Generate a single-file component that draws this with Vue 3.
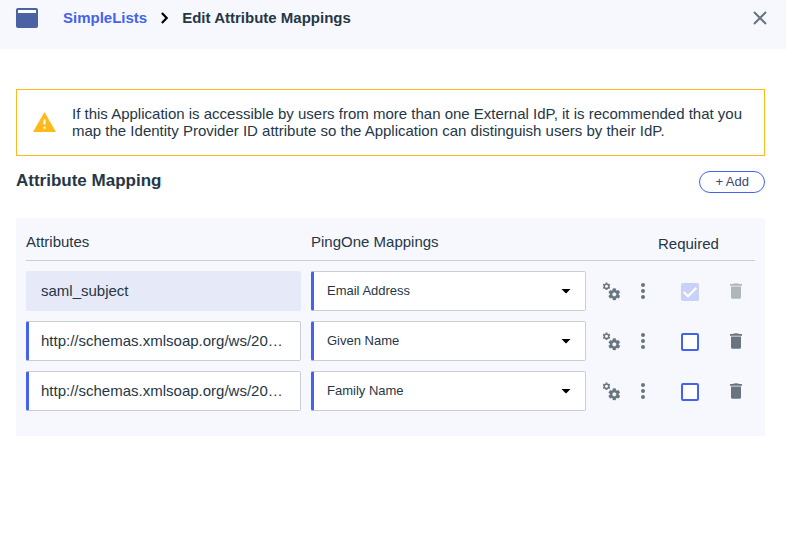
<script setup>
import { reactive } from 'vue'

const options = ['Email Address', 'Given Name', 'Family Name']

const rows = reactive([
  { attribute: 'saml_subject', mapping: 'Email Address', required: true, locked: true },
  { attribute: 'http://schemas.xmlsoap.org/ws/20…', mapping: 'Given Name', required: false, locked: false },
  { attribute: 'http://schemas.xmlsoap.org/ws/20…', mapping: 'Family Name', required: false, locked: false }
])

function addRow() {
  rows.push({ attribute: '', mapping: options[0], required: false, locked: false })
}

function removeRow(index) {
  rows.splice(index, 1)
}
</script>

<template>
  <div class="page">
    <header class="topbar">
      <svg class="app-icon" width="22" height="20" viewBox="0 0 22 20" aria-hidden="true">
        <rect width="22" height="20" rx="2" fill="#4a61a3" />
        <rect x="2" y="2" width="18" height="3" fill="#fff" />
      </svg>
      <nav class="crumbs" aria-label="Breadcrumb">
        <a class="crumb-link" href="#">SimpleLists</a>
        <svg class="chevron" width="7" height="12" viewBox="0 0 7 12" aria-hidden="true">
          <path d="M.9 .9L5.700 6 .9 11.100" fill="none" stroke="#000" stroke-width="2.2" />
        </svg>
        <span>Edit Attribute Mappings</span>
      </nav>
      <button class="icon-button" type="button" aria-label="Close">
        <svg width="14" height="14" viewBox="0 0 14 14" aria-hidden="true">
          <path d="M1 1l12 12M13 1L1 13" fill="none" stroke="#68747f" stroke-width="2" />
        </svg>
      </button>
    </header>

    <main class="content">
      <div class="alert" role="alert">
        <svg class="alert-icon" width="25" height="25" viewBox="0 0 24 24" aria-hidden="true">
          <path fill="#ffb91d" d="M1 21h22L12 2 1 21z" />
          <path fill="#fff" d="M13 18h-2v-2h2v2zm0-4h-2V9h2v5z" />
        </svg>
        <p>
          If this Application is accessible by users from more than one External IdP, it is recommended that you
          map the Identity Provider ID attribute so the Application can distinguish users by their IdP.
        </p>
      </div>

      <div class="section-head">
        <h2>Attribute Mapping</h2>
        <button class="add-button" type="button" @click="addRow">+ Add</button>
      </div>

      <div class="panel">
        <table class="mappings">
          <colgroup>
            <col />
            <col />
            <col class="col-tools" />
            <col class="col-required" />
            <col class="col-delete" />
          </colgroup>
          <thead>
            <tr>
              <th scope="col">Attributes</th>
              <th scope="col">PingOne Mappings</th>
              <td></td>
              <th scope="col" class="th-required">Required</th>
              <td></td>
            </tr>
          </thead>
          <tbody>
            <tr v-for="(row, i) in rows" :key="i">
              <td class="field-cell">
                <input v-model="row.attribute" class="field text-field" type="text" :disabled="row.locked" aria-label="Attribute" />
              </td>
              <td class="field-cell">
                <div class="stack">
                  <select v-model="row.mapping" class="field select-field" aria-label="PingOne mapping">
                    <option v-for="option in options" :key="option">{{ option }}</option>
                  </select>
                  <svg class="caret" width="10" height="5" viewBox="0 0 10 5" aria-hidden="true">
                    <path d="M0.5 0h9L5.6 4.100q-.6.5-1.2 0z" fill="#000" />
                  </svg>
                </div>
              </td>
              <td>
                <div class="tools">
                  <button class="icon-button" type="button" aria-label="Advanced expression">
                    <svg width="20" height="20" viewBox="0 0 20 20" fill="#68747f" aria-hidden="true">
                      <g transform="translate(5.1 6.1) scale(.6)">
                        <path stroke="#68747f" stroke-width=".5" d="M19.14 12.94c.04-.3.06-.61.06-.94 0-.32-.02-.64-.07-.94l2.03-1.58c.18-.14.23-.41.12-.61l-1.92-3.32c-.12-.22-.37-.29-.59-.22l-2.39.96c-.5-.38-1.03-.7-1.62-.94l-.36-2.54c-.04-.24-.24-.41-.48-.41h-3.84c-.24 0-.43.17-.47.41l-.36 2.54c-.59.24-1.13.57-1.62.94l-2.39-.96c-.22-.08-.47 0-.59.22L2.74 8.87c-.12.21-.08.47.12.61l2.03 1.58c-.05.3-.09.63-.09.94s.02.64.07.94l-2.03 1.58c-.18.14-.23.41-.12.61l1.92 3.32c.12.22.37.29.59.22l2.39-.96c.5.38 1.03.7 1.62.94l.36 2.54c.05.24.24.41.48.41h3.84c.24 0 .44-.17.47-.41l.36-2.54c.59-.24 1.13-.56 1.62-.94l2.39.96c.22.08.47 0 .59-.22l1.92-3.32c.12-.22.07-.47-.12-.61l-2.01-1.58zM12 15.6c-1.98 0-3.6-1.62-3.6-3.6s1.62-3.6 3.6-3.6 3.6 1.62 3.6 3.6-1.62 3.6-3.6 3.6z" />
                      </g>
                      <g transform="translate(4.5 5.3)" fill="none" stroke="#68747f">
                        <circle r="2.2" stroke-width="1.4" />
                        <path d="M0-3.8v1.4M0 3.8V2.4M-3.3-1.9l1.2.7M3.3 1.9l-1.2-.7M-3.3 1.9l1.2-.7M3.3-1.9l-1.2.7" stroke-width="1.8" />
                      </g>
                    </svg>
                  </button>
                  <button class="icon-button" type="button" aria-label="More options">
                    <svg width="4" height="16" viewBox="0 0 4 16" fill="#68747f" aria-hidden="true">
                      <circle cx="2" cy="2" r="2" />
                      <circle cx="2" cy="8" r="2" />
                      <circle cx="2" cy="14" r="2" />
                    </svg>
                  </button>
                </div>
              </td>
              <td class="required-cell">
                <div class="check">
                  <input v-model="row.required" type="checkbox" :disabled="row.locked" aria-label="Required" />
                  <svg v-if="row.required" width="18" height="18" viewBox="0 0 18 18" aria-hidden="true">
                    <path d="M2.7 9l4.3 4.3 8.3-8.6" fill="none" stroke="#fff" stroke-width="2" />
                  </svg>
                </div>
              </td>
              <td>
                <div class="delete">
                  <button class="icon-button" type="button" :disabled="row.locked" aria-label="Delete" @click="removeRow(i)">
                    <svg width="12" height="16" viewBox="0 0 12 16" fill="#68747f" aria-hidden="true">
                      <path d="M0 1h2.600Q4 .2 6 .2t3.400.8H12v1.700H0zM1 3.600h10v10.600q0 1.500-1.500 1.500h-7Q1 15.700 1 14.200z" />
                    </svg>
                  </button>
                </div>
              </td>
            </tr>
          </tbody>
        </table>
      </div>
    </main>
  </div>
</template>

<style>
body {
  background: #fff;
}
</style>

<style scoped>
.page {
  color: #253746;
  font-family: "Liberation Sans", Arial, sans-serif;
  font-size: 15px;
  line-height: 17px;
}

.page *,
.page {
  box-sizing: border-box;
}

svg {
  display: block;
  flex: none;
}

.topbar {
  display: flex;
  align-items: center;
  gap: 25px;
  padding: 8px 19px 21px 16px;
  background: #f7f8fd;
}

.crumbs {
  display: flex;
  flex: 1;
  align-items: center;
  gap: 14px;
  font-weight: bold;
  line-height: 16px;
}

.crumb-link {
  color: #4462ed;
  text-decoration: none;
}

.icon-button {
  display: block;
  padding: 0;
  border: 0;
  background: none;
  cursor: pointer;
}

.icon-button:disabled {
  opacity: 0.5;
  cursor: default;
}

.content {
  padding: 40px 21px 40px 16px;
}

.alert {
  display: flex;
  align-items: center;
  gap: 15px;
  padding: 14px 15px;
  border: 1px solid #ffb91d;
  min-height: 67px;
}

.alert p {
  margin: 0;
  padding-bottom: 2px;
}

.section-head {
  display: flex;
  align-items: flex-start;
  justify-content: space-between;
  padding: 15px 0 25px;
}

h2 {
  margin: 0;
  font-size: 17px;
  line-height: 20px;
}

.add-button {
  height: 22px;
  padding: 0 15px;
  border: 1px solid #4462ed;
  border-radius: 11px;
  background: #fff;
  color: #3b4a73;
  font: 13px/20px "Liberation Sans", Arial, sans-serif;
  cursor: pointer;
}

.panel {
  padding: 10px 10px 25px;
  background: #f7f8fd;
}

.mappings {
  width: 100%;
  table-layout: fixed;
  border-collapse: separate;
  border-spacing: 0;
}

.col-tools {
  width: 62px;
}

.col-required {
  width: 64px;
}

.col-delete {
  width: 33px;
}

thead th,
thead td {
  height: 33px;
  padding: 5px 0 10px;
  border-bottom: 1px solid #caced3;
  font-weight: normal;
  text-align: left;
  vertical-align: top;
}

thead .th-required {
  padding: 7px 0 8px;
}

tbody td {
  padding: 10px 0 0;
}

tbody .field-cell {
  padding-right: 10px;
}

.field {
  display: block;
  width: 100%;
  height: 40px;
  margin: 0;
  border: 1px solid #caced3;
  border-left: 3px solid #4462ed;
  border-radius: 2px;
  background: #fff;
  color: #253746;
  font-family: inherit;
  text-overflow: ellipsis;
}

.text-field {
  padding: 0 12px 2px;
  font-size: 15px;
}

.text-field:disabled {
  border-color: #e5e9f8;
  background: #e5e9f8;
}

.select-field {
  appearance: none;
  padding: 0 32px 2px 13px;
  font-size: 13px;
}

.stack,
.check {
  display: grid;
  align-items: center;
}

.stack > *,
.check > * {
  grid-area: 1 / 1;
}

.stack > svg,
.check > svg {
  z-index: 1;
  pointer-events: none;
}

.caret {
  justify-self: end;
  margin-right: 15px;
}

.tools {
  display: flex;
  align-items: center;
  gap: 19px;
  padding-left: 6px;
}

tbody .required-cell {
  padding-top: 12px;
}

.check {
  justify-items: center;
}

.check input {
  appearance: none;
  width: 18px;
  height: 18px;
  margin: 0;
  border: 2px solid #4462ed;
  border-radius: 2px;
  background: #fff;
}

.check input:checked {
  background: #4462ed;
}

.check input:disabled {
  border-color: #cad1f7;
  background: #cad1f7;
}

.delete {
  padding-left: 8px;
}
</style>
